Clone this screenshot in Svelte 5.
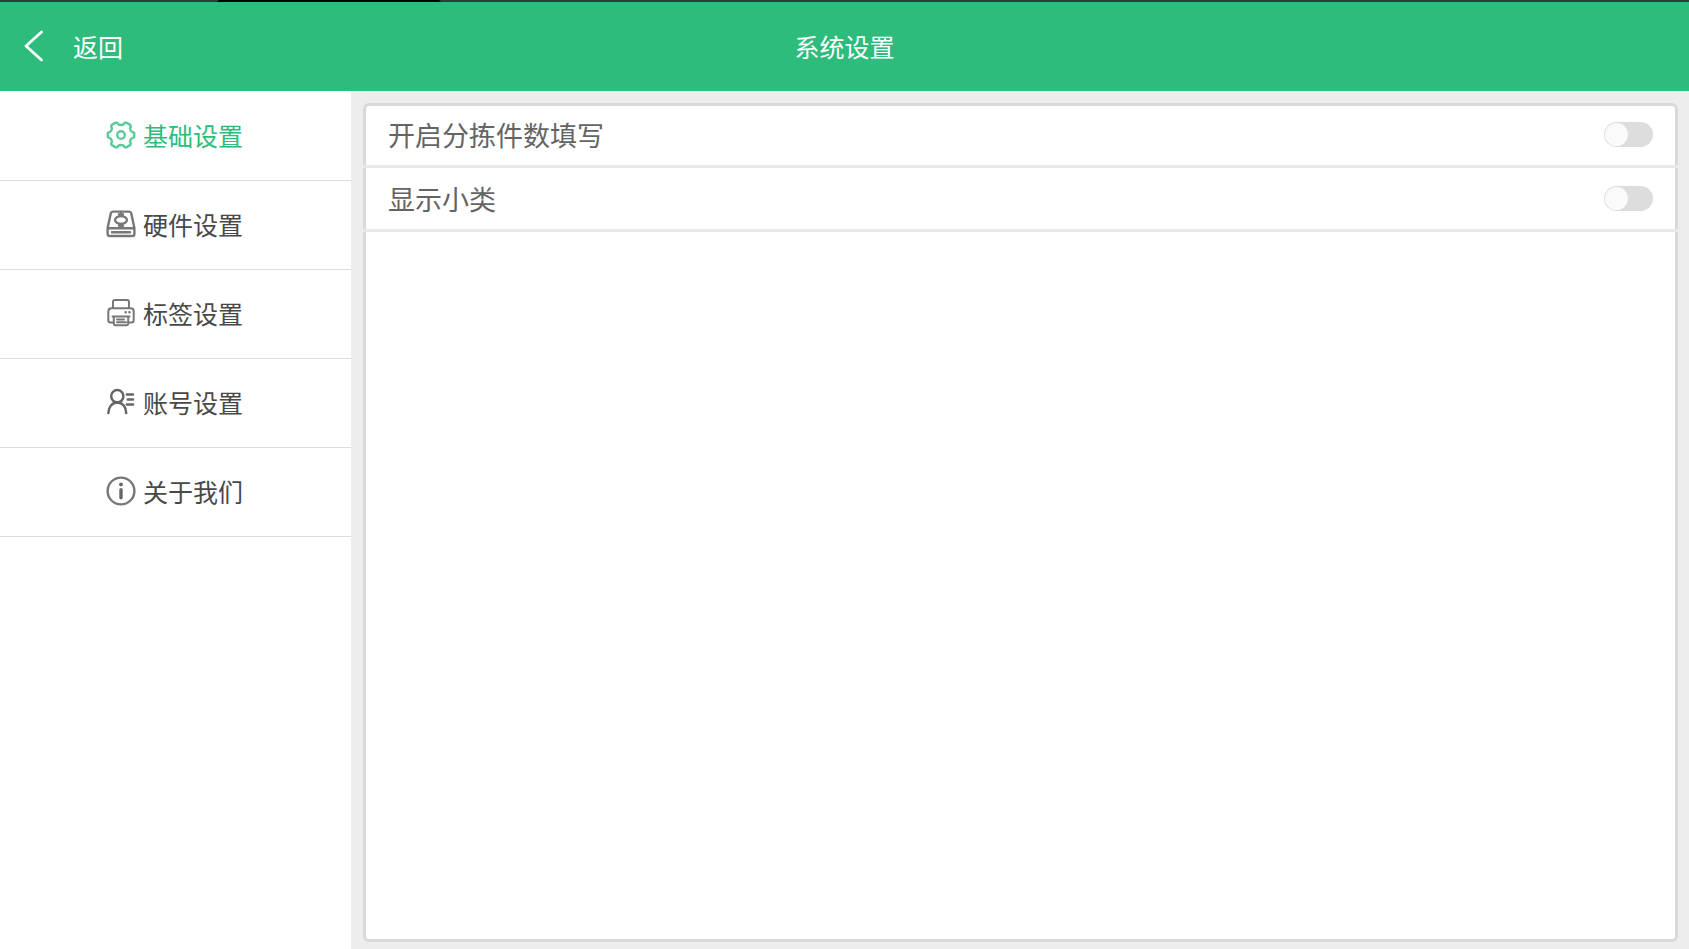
<script>
  const items = [
    { id: 'basic', label: '基础设置' },
    { id: 'hardware', label: '硬件设置' },
    { id: 'label', label: '标签设置' },
    { id: 'account', label: '账号设置' },
    { id: 'about', label: '关于我们' }
  ];
  let active = $state('basic');
  let options = $state([
    { id: 'piece-count', label: '开启分拣件数填写', on: false },
    { id: 'subcategory', label: '显示小类', on: false }
  ]);
</script>

<div class="page">
  <div class="strip"><span></span></div>
  <header>
    <button class="back" type="button">
      <svg width="22" height="34" viewBox="0 0 22 34" aria-hidden="true">
        <path d="M18.5 3 3 17 18.5 31" fill="none" stroke="currentColor" stroke-width="2.8" stroke-linecap="round" stroke-linejoin="round" />
      </svg>
      <span>返回</span>
    </button>
    <h1>系统设置</h1>
  </header>

  <div class="body">
    <nav>
      {#each items as item (item.id)}
        <button type="button" class="item" class:active={active === item.id} onclick={() => (active = item.id)}>
          <svg class="icon" viewBox="0 0 30 30" aria-hidden="true">
            {#if item.id === 'basic'}
              <path d="M9.8 2.6 H11.2 L12.4 4.4 Q15 5.6 17.6 4.4 L18.8 2.6 H20.2 L24.2 4.9 L24.9 6.2 L24 8.4 Q24.2 11 26.4 12.2 L28.2 12.8 V17.2 L26.4 17.8 Q24.2 19 24 21.6 L24.9 23.8 L24.2 25.1 L20.2 27.4 H18.8 L17.6 25.6 Q15 24.4 12.4 25.6 L11.2 27.4 H9.8 L5.8 25.1 L5.1 23.8 L6 21.6 Q5.8 19 3.6 17.8 L1.8 17.2 V12.8 L3.6 12.2 Q5.8 11 6 8.4 L5.1 6.2 L5.8 4.9 Z" />
              <circle cx="15" cy="15" r="3.8" />
            {:else if item.id === 'hardware'}
              <path d="M6.8 2.6 H23.2 Q24.8 2.6 25.2 4.2 L28.4 19 V25 Q28.4 27 26.4 27 H3.6 Q1.6 27 1.6 25 V19 L4.8 4.2 Q5.2 2.6 6.8 2.6 Z M1.8 19.3 H28.2 M6 23.3 H24" />
              <ellipse cx="15" cy="11" rx="5.9" ry="3.9" />
              <path d="M15 4 V7 M15 15 V18.5 M13 5.2 L15 7 L17 5.2 M13 16.8 L15 15 L17 16.8" />
            {:else if item.id === 'label'}
              <g class="fine">
                <path d="M7 10 V4 Q7 2 9 2 H21 Q23 2 23 4 V10" />
                <path d="M7 24.5 H4.5 Q2.3 24.5 2.3 22.3 V13.5 Q2.3 10.3 5.5 10.3 H24.5 Q27.7 10.3 27.7 13.5 V22.3 Q27.7 24.5 25.5 24.5 H23" />
                <path d="M6.5 18.5 H23.5 M7.8 18.5 V25.5 Q7.8 27.3 9.6 27.3 H20.4 Q22.2 27.3 22.2 25.5 V18.5 M11 21.5 H18 M11 24.3 H20" />
                <path class="lamp" d="M19.6 14.2 h.2 M23.4 14.2 h.2" />
              </g>
            {:else if item.id === 'account'}
              <g class="bold">
                <circle cx="11.3" cy="9.2" r="6.1" />
                <path d="M2.4 26 C2.4 20 6 15.5 11.3 15.5 C16.6 15.5 20.2 20 20.2 26" />
                <path d="M20.8 7.5 H27 M21.8 12.5 H27 M20.8 17.5 H27" />
              </g>
            {:else}
              <circle cx="15" cy="15" r="13.4" />
              <circle class="dot" cx="15" cy="8.4" r="1.9" />
              <path class="stem" d="M15 13.7 V21.7" />
            {/if}
          </svg>
          <span>{item.label}</span>
        </button>
      {/each}
    </nav>

    <main>
      <section class="panel">
        <div class="options">
          {#each options as option (option.id)}
            <label class="option">
              <span>{option.label}</span>
              <input type="checkbox" role="switch" bind:checked={option.on} />
            </label>
          {/each}
        </div>
      </section>
    </main>
  </div>
</div>

<style>
  :global(body) {
    margin: 0;
  }
  .page {
    display: flex;
    flex-direction: column;
    min-height: 100vh;
    background: #ededed;
    font-family: "Noto Sans CJK SC", sans-serif;
    color: #484848;
  }
  button {
    margin: 0;
    border: 0;
    background: none;
    font: inherit;
    color: inherit;
    cursor: pointer;
  }
  .strip {
    height: 2px;
    padding-left: 217px;
    background: #373a3d;
  }
  .strip span {
    display: block;
    width: 224px;
    height: 2px;
    background: #000;
    clip-path: polygon(2px 0, 222px 0, 100% 100%, 0 100%);
  }
  header {
    display: grid;
    grid-template-columns: 1fr auto 1fr;
    align-items: center;
    height: 89px;
    padding-bottom: 2px;
    box-sizing: border-box;
    background: #2dbc7b;
    color: #fff;
  }
  .back {
    display: flex;
    align-items: center;
    justify-self: start;
    gap: 28px;
    padding: 0 23px;
    font-size: 25px;
    line-height: 36px;
  }
  h1 {
    margin: 0;
    font-size: 25px;
    line-height: 36px;
    font-weight: 400;
  }
  .body {
    display: flex;
    flex: 1;
  }
  nav {
    flex: none;
    width: 351px;
    padding-top: 1px;
    box-sizing: border-box;
    background: #fff;
  }
  .item {
    display: flex;
    align-items: center;
    justify-content: center;
    gap: 7px;
    width: 100%;
    height: 89px;
    padding: 0 2px 2px 0;
    border-bottom: 1px solid #ddd;
    font-size: 25px;
    line-height: 36px;
  }
  .item.active {
    color: #2dbc7b;
  }
  .icon {
    width: 30px;
    height: 30px;
    fill: none;
    stroke: #777;
    stroke-width: 2.4;
    stroke-linejoin: round;
    stroke-linecap: round;
  }
  .active .icon {
    stroke: #5ccb99;
  }
  .fine {
    stroke-width: 2;
  }
  .lamp {
    stroke-width: 2.4;
  }
  .bold {
    stroke-width: 2.5;
    stroke: #666;
  }
  .dot {
    fill: #666;
    stroke: none;
  }
  .stem {
    stroke: #666;
    stroke-width: 3.4;
  }
  main {
    display: flex;
    flex: 1;
    padding: 12px 11px 7px 12px;
  }
  .panel {
    flex: 1;
    border: 3px solid #d9d9d9;
    border-radius: 6px;
    background: #fff;
  }
  .options {
    margin: -2px -3px 0;
  }
  .option {
    display: flex;
    align-items: center;
    justify-content: space-between;
    height: 64px;
    padding: 0 25px;
    box-sizing: border-box;
    border-bottom: 3px solid #e9e9e9;
    font-size: 27px;
    line-height: 40px;
    color: #646464;
  }
  input {
    appearance: none;
    flex: none;
    width: 49px;
    height: 25px;
    margin: 0;
    padding: 1px;
    box-sizing: border-box;
    border-radius: 13px;
    background: #ddd;
    cursor: pointer;
  }
  input::before {
    content: "";
    display: block;
    width: 23px;
    height: 23px;
    border-radius: 50%;
    background: #fafafa;
  }
  input:checked {
    background: #2dbc7b;
  }
  input:checked::before {
    margin-left: auto;
  }
</style>
